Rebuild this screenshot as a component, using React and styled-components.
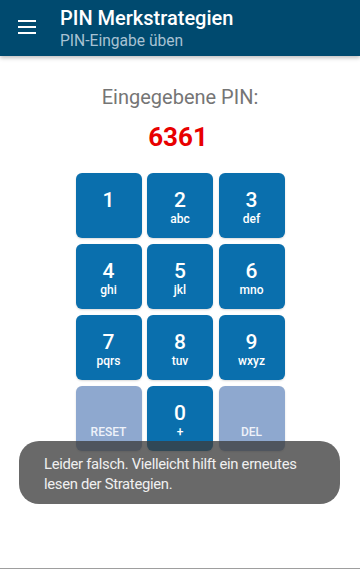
import React from "react";
import styled, { createGlobalStyle } from "styled-components";

const Global = createGlobalStyle`
  html, body { margin: 0; padding: 0; background: #fff; }
  body { font-family: Roboto, "Noto Sans", sans-serif; }
  * { box-sizing: border-box; }
`;

const Page = styled.div`
  position: relative;
  width: 360px;
  height: 569px;
  display: flex;
  flex-direction: column;
  border-bottom: 1px solid #9e9e9e;
  overflow: hidden;
`;

const AppBar = styled.header`
  height: 56px;
  background: #004a6f;
  display: flex;
  align-items: flex-start;
  box-shadow: 0 2px 4px rgba(0, 0, 0, 0.25);
  position: relative;
  z-index: 1;
`;

const MenuButton = styled.div`
  width: 60px;
  height: 53px;
  display: flex;
  align-items: center;
  justify-content: center;
  padding-right: 6px;
`;

const Titles = styled.div`
  display: flex;
  flex-direction: column;
  padding-top: 6px;
`;

const Title = styled.div`
  color: #fff;
  font-size: 20px;
  font-weight: 500;
  line-height: 24px;
`;

const Subtitle = styled.div`
  color: #a8c2d3;
  font-size: 15.6px;
  line-height: 22px;
`;

const Content = styled.main`
  display: flex;
  flex-direction: column;
  align-items: center;
  padding-top: 28px;
`;

const Label = styled.div`
  color: #757575;
  font-size: 20px;
  line-height: 26px;
`;

const Pin = styled.div`
  color: #e80000;
  font-size: 26px;
  font-weight: 700;
  line-height: 30px;
  margin-top: 12px;
  padding-right: 4px;
`;

const Pad = styled.div`
  display: grid;
  grid-template-columns: repeat(3, 66px);
  grid-auto-rows: 65px;
  column-gap: 5.5px;
  row-gap: 6px;
  margin-top: 21px;
`;

const Key = styled.div`
  border-radius: 6px;
  background: ${(p) => (p.$muted ? "#8ea8cf" : "#0a6fad")};
  color: ${(p) => (p.$muted ? "#eef2f9" : "#fff")};
  display: flex;
  flex-direction: column;
  align-items: center;
  padding-top: 15px;
  box-shadow: 0 1px 2px rgba(0, 0, 0, 0.15);
`;

const Digit = styled.div`
  font-size: 21px;
  font-weight: 500;
  line-height: 24px;
  height: 24px;
`;

const Letters = styled.div`
  font-size: 12px;
  font-weight: 500;
  line-height: 14px;
  height: 14px;
`;

const Toast = styled.div`
  position: absolute;
  left: 19px;
  right: 20px;
  top: 441px;
  height: 63px;
  border-radius: 20px;
  background: rgba(60, 60, 60, 0.77);
  color: #f0f0f0;
  font-size: 14.8px;
  line-height: 20px;
  letter-spacing: -0.3px;
  padding: 13px 36px 0 25px;
  z-index: 2;
`;

const keys = [
  ["1", ""],
  ["2", "abc"],
  ["3", "def"],
  ["4", "ghi"],
  ["5", "jkl"],
  ["6", "mno"],
  ["7", "pqrs"],
  ["8", "tuv"],
  ["9", "wxyz"],
  ["", "RESET", true],
  ["0", "+"],
  ["", "DEL", true],
];

export default function App() {
  return (
    <>
      <Global />
      <Page>
        <AppBar>
          <MenuButton>
            <svg width="18" height="14" viewBox="0 0 18 14">
              <rect x="0" y="0" width="18" height="2" fill="#fff" />
              <rect x="0" y="6" width="18" height="2" fill="#fff" />
              <rect x="0" y="12" width="18" height="2" fill="#fff" />
            </svg>
          </MenuButton>
          <Titles>
            <Title>PIN Merkstrategien</Title>
            <Subtitle>PIN-Eingabe üben</Subtitle>
          </Titles>
        </AppBar>
        <Content>
          <Label>Eingegebene PIN:</Label>
          <Pin>6361</Pin>
          <Pad>
            {keys.map(([d, l, m], i) => (
              <Key key={i} $muted={m}>
                <Digit>{d}</Digit>
                <Letters>{l}</Letters>
              </Key>
            ))}
          </Pad>
        </Content>
        <Toast>Leider falsch. Vielleicht hilft ein erneutes lesen der Strategien.</Toast>
      </Page>
    </>
  );
}
